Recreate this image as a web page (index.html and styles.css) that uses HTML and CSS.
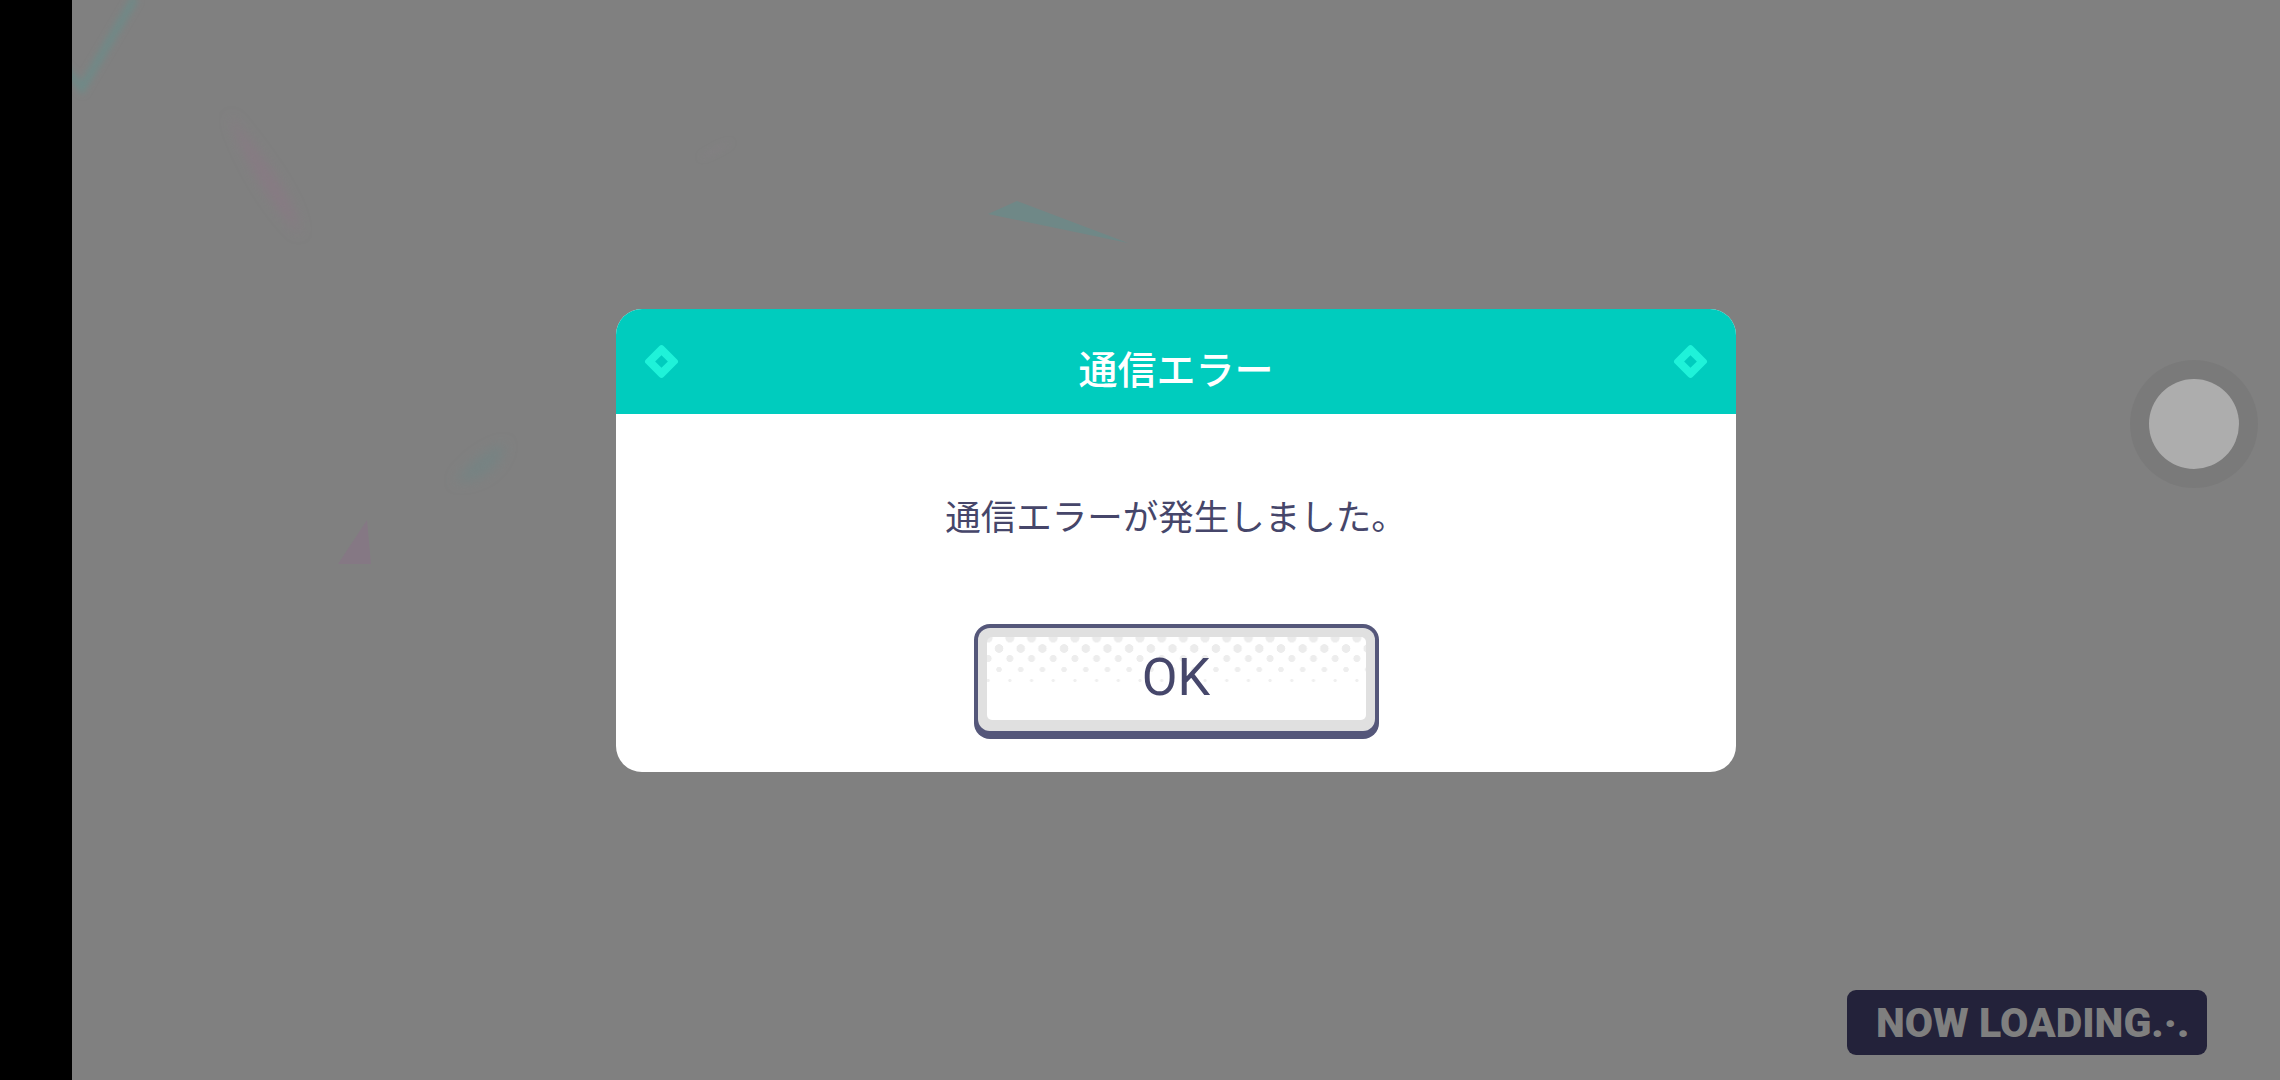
FILE: index.html
```html
<!DOCTYPE html>
<html lang="ja">
<head>
<meta charset="UTF-8">
<meta name="viewport" content="width=device-width, initial-scale=1.0">
<title>通信エラー</title>
<link rel="stylesheet" href="styles.css">
</head>
<body>
<div class="side-bar"></div>

<div class="stage">
  <!-- faint shapes of the scene behind the dim layer -->
  <svg class="scene" viewBox="72 0 2208 1080" width="2208" height="1080" aria-hidden="true">
    <defs>
      <filter id="soft" x="-50%" y="-50%" width="200%" height="200%"><feGaussianBlur stdDeviation="3"/></filter>
      <filter id="softer" x="-50%" y="-50%" width="200%" height="200%"><feGaussianBlur stdDeviation="6"/></filter>
    </defs>
    <polyline points="60,64 82,88 135,-2" fill="none" stroke="#6f8987" stroke-width="8" filter="url(#soft)"/>
    <path d="M230,116 C240,150 266,200 300,234 C296,200 262,156 230,116 Z" fill="#877a83" filter="url(#softer)"/>
    <path d="M700,158 C712,150 724,144 732,142 C722,148 710,155 700,158 Z" fill="#868085" filter="url(#soft)"/>
    <path d="M455,482 C470,460 490,448 506,444 C500,466 484,482 455,482 Z" fill="#768383" filter="url(#softer)"/>
    <polygon points="367,520 338,564 371,564" fill="#857884"/>
    <polygon points="988,214 1017,201 1128,243" fill="#6f8887"/>
  </svg>

  <div class="dialog">
    <div class="dialog-head">
      <span class="gem"></span>
      <h2 class="dialog-title">通信エラー</h2>
      <span class="gem"></span>
    </div>
    <div class="dialog-body">
      <p class="message">通信エラーが発生しました。</p>
      <button class="ok-button" type="button">
        <span class="ok-rim"><span class="ok-face">OK</span></span>
      </button>
    </div>
  </div>

  <div class="round-btn"><span class="round-btn-core"></span></div>

  <div class="loading">NOW LOADING.·.</div>
</div>
</body>
</html>
```

FILE: styles.css
```css
body {
  margin: 0;
  padding: 0;
  width: 2280px;
  height: 1080px;
  overflow: hidden;
  display: flex;
  font-family: "Noto Sans CJK JP", "Noto Sans", sans-serif;
}

.side-bar {
  width: 72px;
  background-color: #000;
}

.stage {
  flex: 1;
  position: relative;
  background-color: #808080;
  display: flex;
  align-items: center;
  justify-content: center;
}

.scene {
  position: absolute;
  left: 0;
  top: 0;
  pointer-events: none;
}

.dialog {
  position: relative;
  width: 1120px;
  background-color: #fff;
  border-radius: 26px;
  overflow: hidden;
}

.dialog-head {
  height: 105px;
  background-color: #00ccbe;
  display: flex;
  align-items: center;
  justify-content: space-between;
  padding: 0 33px;
}

.gem {
  width: 9px;
  height: 9px;
  border: 8.5px solid #1ff2d9;
  border-radius: 3px;
  transform: rotate(45deg);
}

.dialog-title {
  margin: 0;
  padding-top: 12px;
  font-size: 39px;
  line-height: 1;
  font-weight: 500;
  color: #fff;
}

.dialog-body {
  display: flex;
  flex-direction: column;
  align-items: center;
  padding: 75px 0 33px;
}

.message {
  margin: 0 0 84px;
  font-size: 35.5px;
  line-height: 51px;
  color: #46466a;
}

.ok-button {
  width: 405px;
  height: 115px;
  box-sizing: border-box;
  padding: 4px 4px 8px;
  border: none;
  border-radius: 16px;
  background-color: #55577a;
  cursor: pointer;
}

.ok-rim {
  display: block;
  height: 100%;
  box-sizing: border-box;
  padding: 9px 9px 11px;
  border-radius: 12px;
  background-color: #e0e0e0;
}

.ok-face {
  display: flex;
  align-items: center;
  justify-content: center;
  height: 100%;
  border-radius: 5px;
  background-color: #fff;
  background-image:
    radial-gradient(circle, #ececec 4.2px, transparent 4.8px),
    radial-gradient(circle, #ececec 4px, transparent 4.6px),
    radial-gradient(circle, #ededed 3.2px, transparent 3.8px),
    radial-gradient(circle, #eeeeee 2.4px, transparent 3px),
    radial-gradient(circle, #efefef 1.3px, transparent 1.9px);
  background-size: 21.7px 11px;
  background-repeat: repeat-x;
  background-position: 12px -4.5px, 1.2px 6px, 12px 16.5px, 1.2px 27.5px, 12px 38.5px;
  font-family: Roboto, "Noto Sans", sans-serif;
  font-size: 52px;
  line-height: 1;
  color: #46476b;
}

.round-btn {
  position: absolute;
  right: 22px;
  top: 360px;
  width: 128px;
  height: 128px;
  border-radius: 50%;
  background-color: #7a7a7a;
  display: flex;
  align-items: center;
  justify-content: center;
}

.round-btn-core {
  width: 90px;
  height: 90px;
  border-radius: 50%;
  background-color: #adadad;
}

.loading {
  position: absolute;
  right: 73px;
  bottom: 25px;
  width: 360px;
  height: 65px;
  box-sizing: border-box;
  padding-left: 29px;
  display: flex;
  align-items: center;
  border-radius: 9px;
  background-color: #23223a;
  font-family: Roboto, "Liberation Sans", sans-serif;
  font-weight: 900;
  font-size: 41px;
  color: #7f7f7f;
  white-space: nowrap;
}
```
